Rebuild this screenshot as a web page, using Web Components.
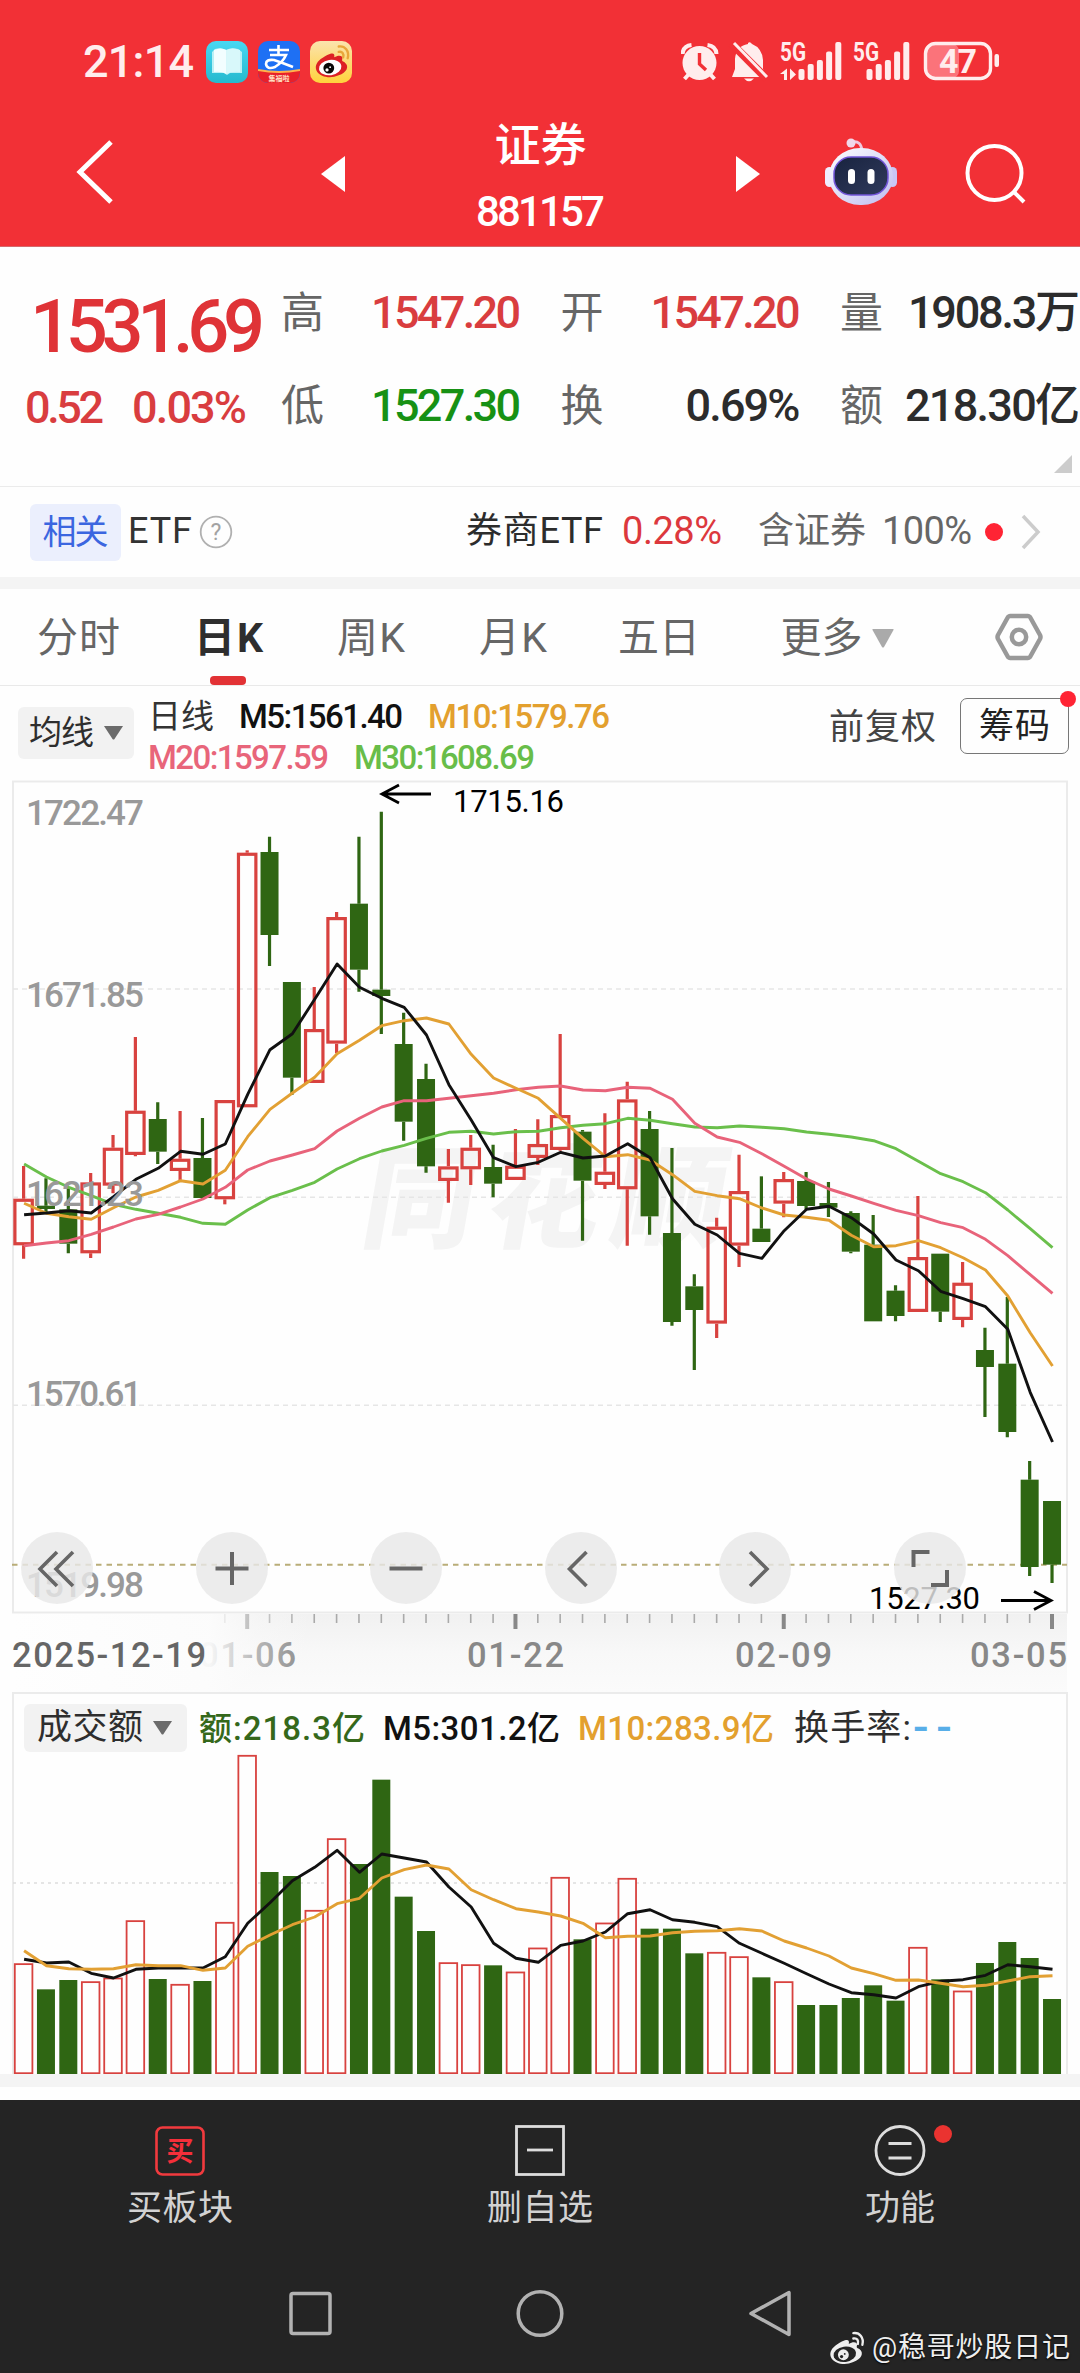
<!DOCTYPE html>
<html lang="zh-CN">
<head>
<meta charset="utf-8">
<title>证券 881157</title>
<style>
  body {
    margin: 0;
    width: 1080px;
    background: #fefefe;
    color: #333;
    font-family: Roboto, "Noto Sans CJK SC", sans-serif;
    font-size: 36px;
    overflow-x: hidden;
  }
</style>
</head>
<body>
<status-bar></status-bar>
<stock-header name="证券" code="881157"></stock-header>
<quote-panel></quote-panel>
<etf-row></etf-row>
<section-gap size="12"></section-gap>
<period-tabs></period-tabs>
<average-legend></average-legend>
<candle-chart></candle-chart>
<date-axis></date-axis>
<volume-chart></volume-chart>
<section-gap size="13"></section-gap>
<section-gap size="13" tone="#fefefe"></section-gap>
<bottom-toolbar>
  <tool-item w="106" label="买板块">
    <svg width="50" height="52" viewBox="0 0 50 52" fill="none" stroke="#f23a3e" stroke-width="2.6">
      <rect x="1.5" y="2.5" width="47" height="47" rx="6"/>
      <text x="25" y="35.5" text-anchor="middle" font-size="27" font-weight="700" fill="#f52f3a" stroke="none">买</text>
    </svg>
  </tool-item>
  <tool-item w="106" label="删自选">
    <svg width="50" height="52" viewBox="0 0 50 52" fill="none" stroke="#ddd" stroke-width="2.8">
      <rect x="1.5" y="1.5" width="47" height="48"/>
      <path d="M12 25H38"/>
    </svg>
  </tool-item>
  <tool-item w="70" label="功能" dot>
    <svg width="52" height="52" viewBox="0 0 52 52" fill="none" stroke="#ddd" stroke-width="2.8">
      <circle cx="26" cy="25.500" r="24"/>
      <path d="M14.500 18.500H37.500M14.500 33H37.500"/>
    </svg>
  </tool-item>
</bottom-toolbar>
<system-nav></system-nav>

<script>
const GREEN = "#2f6613";
const RED = "#d8423f";
const COUNT = 47;
const centerX = (i) => 23.6 + i * 22.357;

const define = (tag, html) => {
  customElements.define(
    tag,
    class extends HTMLElement {
      constructor() {
        super();
        this.attachShadow({ mode: "open" });
        this.shadowRoot.innerHTML = typeof html === "function" ? html(this) : html;
      }
    }
  );
};

const weibo = (body, pupil, hole, wave) => `
  <path d="M8 19C3 23 1 28 4 33C8 39 19 41 28 37C37 34 40 27 35 23C33 21 31 22 32 19C33 15 28 14 23 17C24 12 21 10 8 19Z" fill="${body}"/>
  <ellipse cx="18.500" cy="28.500" rx="12.500" ry="8.500" fill="${hole}" transform="rotate(-8 18 28)"/>
  <circle cx="17" cy="29" r="6" fill="${pupil}"/>
  <circle cx="15" cy="31" r="1.800" fill="${hole}"/><circle cx="18.500" cy="28" r="1" fill="${hole}"/>
  <path d="M28 5C35 4 40 10 38 18M28 11C32 10 34 13 33 17" fill="none" stroke="${wave}" stroke-width="2.600" stroke-linecap="round"/>`;

// Text whose tracking is adjusted to fill a given width.
class FitText extends HTMLElement {
  constructor() {
    super();
    this.attachShadow({ mode: "open" });
    this.shadowRoot.innerHTML = `
      <style>
        :host { display: inline-block; white-space: nowrap; line-height: 1.2; flex: none; }
      </style>
      <slot></slot>`;
  }

  connectedCallback() {
    const width = Number(this.getAttribute("w"));
    const length = [...this.textContent].length;
    const natural = this.getBoundingClientRect().width;
    if (length > 1) {
      this.style.letterSpacing = `${(width - natural) / (length - 1)}px`;
    }
    this.style.width = `${width}px`;
  }
}
customElements.define("fit-text", FitText);

define(
  "section-gap",
  (el) => `
  <style>
    :host { display: block; height: ${el.getAttribute("size")}px; background: ${el.getAttribute("tone") || "#f4f4f4"}; }
  </style>`
);

const bars = [27, 22, 18, 9.5, 0]
  .map((y, i) => `<rect x="${i * 9.2}" y="${y}" width="6" height="${38 - y}" rx="2"/>`)
  .join("");

define(
  "status-bar",
  `
  <style>
    :host { display: flex; height: 122px; box-sizing: border-box; padding: 31px 81px 0 83px; background: #f23036; color: #ffeded; justify-content: space-between; }
    .side { display: flex; height: 62px; align-items: center; }
    .time { font-size: 45px; font-weight: 500; margin-right: 12px; }
    .app { margin-right: 10px; }
    svg { display: block; flex: none; }
  </style>
  <div class="side">
    <fit-text class="time" w="111">21:14</fit-text>
    <svg class="app" width="42" height="42" viewBox="0 0 42 42">
      <defs><linearGradient id="bk" x2="0" y2="1"><stop stop-color="#48d8f3"/><stop offset="1" stop-color="#25b9ce"/></linearGradient></defs>
      <rect width="42" height="42" rx="10" fill="url(#bk)"/>
      <path d="M6 11L9 8Q15 6 20 9Q25 6 32 8L36 11V32H24L21 34L18 32H6Z" fill="#b8f0f5"/>
      <path d="M8 9Q15 6 20.500 9V33Q15 30 8 31Z" fill="#f2feff"/>
      <path d="M20.500 9Q26 6 34 9V31Q26 30 20.500 33Z" fill="#d8f8fa"/>
    </svg>
    <svg class="app" width="42" height="42" viewBox="0 0 42 42">
      <defs><clipPath id="zc"><rect width="42" height="42" rx="10"/></clipPath></defs>
      <g clip-path="url(#zc)">
        <rect width="42" height="42" fill="#1e70f4"/>
        <path d="M0 29Q21 33 42 29V42H0Z" fill="#e8202a"/>
        <path d="M0 29Q21 33 42 29" fill="none" stroke="#ffb24c" stroke-width="1.800"/>
        <g fill="none" stroke="#fff" stroke-width="2.600">
          <path d="M11 9H31M20.500 4V14M12 14H28Q25 21 17 26Q9 29 8 23Q8 18 16 19Q25 22 35 26"/>
        </g>
        <text x="21" y="39.500" text-anchor="middle" font-size="7" font-weight="700" fill="#ffe2c4">集福啦</text>
      </g>
    </svg>
    <svg width="42" height="42" viewBox="0 0 42 42">
      <defs><linearGradient id="wb" x2="0" y2="1"><stop stop-color="#fbe3ae"/><stop offset="1" stop-color="#ffd23c"/></linearGradient></defs>
      <rect width="42" height="42" rx="10" fill="url(#wb)"/>
      <g transform="translate(3.500 1) scale(.9)">${weibo("#dd2025", "#0a0808", "#fff", "#e9a63b")}</g>
    </svg>
  </div>
  <div class="side">
    <svg width="318" height="62" viewBox="0 -10 318 62" fill="#ffeded">
      <circle cx="18.500" cy="22" r="17"/>
      <path d="M8 33L3.500 38M29 33L33.500 38" stroke="#ffeded" stroke-width="4"/>
      <path d="M1.500 13Q2 5 10.500 4M35.500 13Q35 5 26.500 4" fill="none" stroke="#ffeded" stroke-width="4"/>
      <path d="M18.500 12V23L25 29" fill="none" stroke="#f23036" stroke-width="3.400"/>

      <path d="M51 36L54 28V18Q55 5 67 3V2Q69 0 71 3Q81 7 82 19V28L85 36Z"/>
      <path d="M63 37.500H73Q68 43 63 37.500Z"/>
      <path d="M50 2L86 38" stroke="#f23036" stroke-width="8"/>
      <path d="M53 2L86 36" stroke="#ffeded" stroke-width="3"/>

      <text x="99" y="19.500" font-size="25" font-weight="700" textLength="26" lengthAdjust="spacingAndGlyphs">5G</text>
      <path d="M99 33L106 27.500V39H103V33ZM109 27.500L115 33.500L109 39Z"/>
      <g transform="translate(117.500 1)">${bars}</g>
      <text x="172" y="19.500" font-size="25" font-weight="700" textLength="26" lengthAdjust="spacingAndGlyphs">5G</text>
      <g transform="translate(185.500 1)">${bars}</g>

      <rect x="245" y="3" width="33" height="34" rx="7" fill="#fb737a"/>
      <rect x="244.500" y="2.500" width="65" height="35" rx="10" fill="none" stroke="#ffeded" stroke-width="3.400"/>
      <rect x="313.500" y="13" width="4.500" height="13" rx="2"/>
      <text x="258" y="32" font-size="34" font-weight="700" textLength="38">47</text>
    </svg>
  </div>`
);

define(
  "stock-header",
  (el) => `
  <style>
    :host { display: grid; grid-template-columns: 321px 24px 391px 24px 64px 74px 1fr; height: 124px; border-bottom: 1px solid #d4696c; background: #f23036; color: #fff; }
    svg { display: block; }
    .title { display: flex; flex-direction: column; align-items: center; font-weight: 500; }
    .name { font-size: 46px; line-height: 46px; }
    .code { font-size: 42px; line-height: 48px; margin-top: 20px; }
  </style>
  <svg width="120" height="124" viewBox="0 0 120 124"><path d="M111 20L80 50L111 80" fill="none" stroke="#fff" stroke-width="5"/></svg>
  <svg width="24" height="124" viewBox="0 0 24 124"><path d="M0 52L24 34V70Z" fill="#fff"/></svg>
  <div class="title">
    <fit-text class="name" w="92">${el.getAttribute("name")}</fit-text>
    <fit-text class="code" w="129">${el.getAttribute("code")}</fit-text>
  </div>
  <svg width="24" height="124" viewBox="0 0 24 124"><path d="M0 34V70L24 52Z" fill="#fff"/></svg>
  <span></span>
  <svg width="74" height="124" viewBox="0 0 74 124">
    <defs>
      <linearGradient id="hd" x2="1" y2="1"><stop stop-color="#fff"/><stop offset="1" stop-color="#bebcf0"/></linearGradient>
      <linearGradient id="fc" x2="1" y2="1"><stop stop-color="#18233f"/><stop offset="1" stop-color="#303a5c"/></linearGradient>
    </defs>
    <rect x="1" y="45" width="9" height="20" rx="4.500" fill="#f0edff"/>
    <rect x="64" y="45" width="9" height="20" rx="4.500" fill="#c9c6f6"/>
    <path d="M28 20Q37 18 38 29" fill="none" stroke="#efc9df" stroke-width="3"/>
    <circle cx="27" cy="21" r="4.500" fill="#f1d8ea"/>
    <rect x="5" y="26" width="64" height="57" rx="31" fill="url(#hd)"/>
    <rect x="10" y="35" width="54" height="38" rx="17" fill="url(#fc)" stroke="#7255d8" stroke-width="1.500"/>
    <rect x="24" y="47" width="7" height="15" rx="3.500" fill="#fff"/>
    <rect x="43.500" y="47" width="7" height="15" rx="3.500" fill="#fff"/>
  </svg>
  <svg width="182" height="124" viewBox="0 0 182 124" fill="none" stroke="#fff" stroke-width="4">
    <circle cx="96.500" cy="51" r="27"/><path d="M116 70L126 80"/>
  </svg>`
);

define(
  "quote-cell",
  (el) => `
  <style>
    :host { display: flex; width: 240px; justify-content: space-between; align-items: center; line-height: 52px; }
    .label { font-size: 43px; color: #666; }
    fit-text { font-size: 45px; font-weight: 500; color: ${el.getAttribute("tone") || "#2c2c2c"}; }
  </style>
  <span class="label">${el.getAttribute("label")}</span>
  <fit-text w="${el.getAttribute("w")}">${el.getAttribute("value")}</fit-text>`
);

define(
  "quote-panel",
  `
  <style>
    :host { display: grid; grid-template-columns: 281px 799px; height: 239px; border-bottom: 1px solid #ebebeb; position: relative; }
    .main { padding: 36px 0 0 30px; color: #df3337; font-weight: 500; }
    .price { font-size: 74px; line-height: 88px; vertical-align: top; }
    .change { display: flex; gap: 28px; margin-left: -5px; font-size: 45px; line-height: 52px; margin-top: 10px; color: #d93d3f; }
    .cells { display: grid; grid-template-columns: 240px 240px 240px; column-gap: 39.500px; grid-auto-rows: 52px; row-gap: 41px; padding-top: 40px; }
    .corner { position: absolute; right: 8px; bottom: 13px; }
  </style>
  <div class="main">
    <fit-text class="price" w="235">1531.69</fit-text>
    <div class="change"><fit-text w="79">0.52</fit-text><fit-text w="115">0.03%</fit-text></div>
  </div>
  <div class="cells">
    <quote-cell label="高" value="1547.20" w="150" tone="#d93d3f"></quote-cell>
    <quote-cell label="开" value="1547.20" w="150" tone="#d93d3f"></quote-cell>
    <quote-cell label="量" value="1908.3万" w="172"></quote-cell>
    <quote-cell label="低" value="1527.30" w="150" tone="#179114"></quote-cell>
    <quote-cell label="换" value="0.69%" w="115"></quote-cell>
    <quote-cell label="额" value="218.30亿" w="175"></quote-cell>
  </div>
  <svg class="corner" width="18" height="18"><path d="M18 0V18H0Z" fill="#ccc"/></svg>`
);

define(
  "etf-row",
  `
  <style>
    :host { display: flex; height: 90px; align-items: center; padding-left: 30px; font-size: 36px; }
    .badge { display: flex; width: 91px; height: 57px; align-items: center; justify-content: center; background: #ebeffd; color: #3b66e0; border-radius: 6px; font-size: 34px; }
    .etf { margin: 0 7px 0 7px; }
    .name { margin-left: 233px; color: #2c2c2c; }
    .rate { margin-left: 19px; color: #dc383d; }
    .has { margin-left: 36px; color: #666; }
    .full { margin-left: 16px; color: #666; }
    .dot { width: 18px; height: 18px; border-radius: 50%; background: #ff2434; margin-left: 13px; }
    .go { margin-left: 18px; }
  </style>
  <span class="badge"><fit-text w="66">相关</fit-text></span>
  <fit-text class="etf" w="64">ETF</fit-text>
  <svg width="34" height="34" viewBox="0 0 34 34">
    <circle cx="17" cy="17" r="15.300" fill="none" stroke="#b0b0b0" stroke-width="1.800"/>
    <text x="17" y="25" text-anchor="middle" font-size="23" fill="#a3a3a3">?</text>
  </svg>
  <fit-text class="name" w="137">券商ETF</fit-text>
  <fit-text class="rate" style="font-size:38px" w="100">0.28%</fit-text>
  <fit-text class="has" w="108">含证券</fit-text>
  <fit-text class="full" style="font-size:38px" w="90">100%</fit-text>
  <span class="dot"></span>
  <svg class="go" width="20" height="36" viewBox="0 0 20 36"><path d="M2 2L17 18L2 34" fill="none" stroke="#ccc" stroke-width="3.500"/></svg>`
);

define(
  "period-tabs",
  `
  <style>
    :host { display: grid; grid-template-columns: 157px 143px 142px 142px 150px 168px 178px; height: 96px; border-bottom: 1px solid #e9e9e9; color: #666; font-size: 41px; }
    .tab { display: flex; align-items: center; justify-content: center; position: relative; padding-top: 3px; }
    .on { color: #2e2e2e; font-weight: 700; }
    .on::after { content: ""; position: absolute; left: 53px; bottom: 0; width: 36px; height: 9px; border-radius: 4px; background: #e23235; }
    .more { gap: 9px; padding-left: 38px; }
    .gear { padding: 0 0 0 56px; }
  </style>
  <div class="tab"><fit-text w="83">分时</fit-text></div>
  <div class="tab on"><fit-text w="69">日K</fit-text></div>
  <div class="tab"><fit-text w="68">周K</fit-text></div>
  <div class="tab"><fit-text w="68">月K</fit-text></div>
  <div class="tab"><fit-text w="82">五日</fit-text></div>
  <div class="tab more"><fit-text w="82">更多</fit-text>
    <svg width="22" height="19" viewBox="0 0 22 19"><path d="M1 0H21Q22 0 21.500 1L12 18Q11 19 10 18L.5 1Q0 0 1 0Z" fill="#aaa"/></svg>
  </div>
  <div class="tab gear">
    <svg width="48" height="48" viewBox="0 0 48 48" fill="none" stroke="#999" stroke-linejoin="round">
      <path d="M15 3H33Q34 3 35 4L45 22Q46 24 45 26L35 44Q34 45 33 45H15Q14 45 13 44L3 26Q2 24 3 22L13 4Q14 3 15 3Z" stroke-width="4.500"/>
      <circle cx="24" cy="24" r="7.200" stroke-width="4.500"/>
    </svg>
  </div>`
);

// Grey chip with a caret, used before an indicator's values.
define(
  "pick-button",
  (el) => `
  <style>
    :host { display: flex; box-sizing: border-box; align-items: center; background: #f2f2f2; border-radius: 6px; color: #2e2e2e; }
    svg { margin-left: 10px; }
  </style>
  <fit-text w="${el.getAttribute("w")}">${el.getAttribute("label")}</fit-text>
  <svg width="19" height="14" viewBox="0 0 19 14"><path d="M0 0H19L10.500 13Q9.500 14 8.500 13Z" fill="#6b6b6b"/></svg>`
);

define(
  "average-legend",
  `
  <style>
    :host { display: flex; height: 94px; font-size: 33px; }
    pick-button { width: 116px; height: 52px; margin: 21px 0 0 18px; padding-left: 11px; }
    .values { width: 470px; margin: 10px 0 0 14px; line-height: 40px; }
    .line { display: flex; height: 41px; align-items: center; gap: 25px; }
    .line fit-text { font-weight: 500; }
    .line .kind { font-weight: 400; }
    .adjust { margin: 21px 0 0 211px; font-size: 35px; color: #444; height: 42px; }
    .chips { position: relative; box-sizing: border-box; width: 109px; height: 56px; margin: 12px 0 0 24px; padding-top: 2px; border: 1.500px solid #777; border-radius: 7px; display: flex; align-items: center; justify-content: center; color: #222; font-size: 35px; }
    .chips i { position: absolute; right: -8px; top: -8px; width: 16px; height: 16px; border-radius: 50%; background: #ff2434; }
  </style>
  <pick-button label="均线" w="65"></pick-button>
  <div class="values">
    <div class="line">
      <fit-text class="kind" w="66">日线</fit-text>
      <fit-text w="164" style="color:#111">M5:1561.40</fit-text>
      <fit-text w="182" style="color:#e3a02e">M10:1579.76</fit-text>
    </div>
    <div class="line">
      <fit-text w="181" style="color:#e8657a">M20:1597.59</fit-text>
      <fit-text w="181" style="color:#68bd49">M30:1608.69</fit-text>
    </div>
  </div>
  <fit-text class="adjust" w="107">前复权</fit-text>
  <div class="chips"><fit-text w="71">筹码</fit-text><i></i></div>`
);

// Plot values are measured downwards, three units to a pixel.
// kind, high, body top, body bottom, low
const candles = [
  ["r", 1158, 1256, 1396, 1436], ["g", 1195, 1277, 1287, 1300], ["g", 1225, 1288, 1391, 1420],
  ["r", 1179, 1207, 1420, 1434], ["r", 1065, 1103, 1217, 1240], ["r", 771, 992, 1125, 1129],
  ["g", 967, 1017, 1115, 1152], ["r", 993, 1136, 1173, 1205], ["g", 1014, 1134, 1254, 1257],
  ["r", 960, 960, 1258, 1273], ["r", 211, 218, 982, 982], ["g", 170, 216, 465, 558],
  ["g", 606, 606, 893, 945], ["r", 621, 747, 909, 909], ["r", 396, 411, 791, 820],
  ["g", 170, 371, 569, 635], ["g", 95, 629, 648, 762], ["g", 698, 792, 1025, 1082],
  ["g", 851, 897, 1159, 1178], ["r", 1107, 1159, 1203, 1268], ["r", 1065, 1103, 1168, 1215],
  ["g", 1094, 1161, 1211, 1252], ["r", 1047, 1157, 1200, 1200], ["r", 1018, 1092, 1134, 1155],
  ["r", 762, 1005, 1110, 1112], ["g", 1050, 1055, 1202, 1382], ["r", 1000, 1175, 1215, 1227],
  ["r", 905, 958, 1228, 1397], ["g", 993, 1047, 1309, 1364], ["g", 1104, 1359, 1626, 1637],
  ["g", 1483, 1519, 1590, 1770], ["r", 1313, 1340, 1631, 1674], ["r", 1124, 1233, 1397, 1461],
  ["g", 1189, 1346, 1386, 1386], ["r", 1176, 1197, 1271, 1312], ["g", 1176, 1203, 1278, 1288],
  ["g", 1206, 1269, 1283, 1311], ["g", 1294, 1299, 1415, 1420], ["g", 1305, 1394, 1624, 1624],
  ["g", 1516, 1532, 1608, 1624], ["r", 1248, 1431, 1596, 1596], ["g", 1421, 1421, 1595, 1626],
  ["r", 1446, 1508, 1620, 1642], ["g", 1643, 1710, 1761, 1911], ["g", 1551, 1751, 1956, 1972],
  ["g", 2043, 2099, 2361, 2388], ["g", 2163, 2163, 2354, 2409],
];

const averages = {
  "#6abf4b": [1152, 1191, 1222, 1247, 1273, 1288, 1300, 1312, 1330, 1333, 1290, 1253, 1231, 1207, 1167, 1136, 1113, 1096, 1075, 1057, 1054, 1062, 1055, 1054, 1043, 1036, 1031, 1015, 1021, 1031, 1041, 1043, 1038, 1042, 1046, 1056, 1063, 1071, 1082, 1106, 1144, 1181, 1205, 1238, 1290, 1346, 1403],
  "#e8637a": [1397, 1389, 1382, 1363, 1341, 1317, 1303, 1281, 1257, 1222, 1170, 1143, 1125, 1106, 1053, 1015, 981, 962, 962, 955, 947, 940, 929, 922, 918, 930, 932, 922, 925, 958, 1030, 1071, 1087, 1121, 1159, 1197, 1227, 1248, 1270, 1291, 1307, 1328, 1343, 1378, 1427, 1484, 1540],
  "#e2a033": [1270, 1300, 1310, 1318, 1283, 1251, 1231, 1202, 1212, 1171, 1070, 988, 939, 892, 821, 781, 737, 722, 714, 732, 823, 894, 925, 955, 1015, 1075, 1130, 1124, 1140, 1184, 1234, 1247, 1256, 1284, 1305, 1312, 1321, 1366, 1400, 1397, 1382, 1403, 1433, 1470, 1548, 1658, 1758],
  "#111": [1304, 1299, 1292, 1299, 1250, 1198, 1165, 1114, 1123, 1092, 943, 809, 761, 658, 552, 622, 655, 682, 765, 914, 1020, 1133, 1160, 1147, 1117, 1134, 1128, 1091, 1133, 1256, 1333, 1365, 1420, 1435, 1352, 1288, 1279, 1313, 1362, 1440, 1472, 1534, 1556, 1580, 1648, 1837, 1986],
};

const drawLine = (values, color) =>
  `<polyline points="${values.map((v, i) => `${(centerX(i) + 0.5).toFixed(1)},${(v / 3).toFixed(1)}`).join(" ")}" fill="none" stroke="${color}" stroke-width="2.900" stroke-linejoin="round"/>`;

const drawCandle = ([kind, high, top, bottom, low], i) => {
  const x = centerX(i);
  const color = kind === "r" ? RED : GREEN;
  const wicks = `<path d="M${x} ${high / 3}V${top / 3}M${x} ${bottom / 3}V${low / 3}" stroke="${color}" stroke-width="3.200"/>`;
  const body =
    kind === "r"
      ? `<rect x="${x - 8.7}" y="${top / 3 + 1.6}" width="17.400" height="${(bottom - top) / 3 - 3.2}" fill="none" stroke="${RED}" stroke-width="3.200"/>`
      : `<rect x="${x - 9}" y="${top / 3}" width="18" height="${(bottom - top) / 3}" fill="${GREEN}"/>`;
  return wicks + body;
};

define(
  "candle-chart",
  `
  <style>
    :host { display: block; position: relative; height: 833px; }
    svg { display: block; }
    .plot { overflow: visible; }
    .controls { position: absolute; left: 21px; top: 752px; display: flex; gap: 102.500px; }
    .controls svg { width: 72px; height: 72px; border-radius: 50%; background: rgba(232, 232, 232, 0.82); }
  </style>
  <svg class="plot" width="1080" height="840" viewBox="0 0 1080 840">
    <g font-size="112" font-weight="900" fill="#f4f4f4" transform="translate(352 459) skewX(-10)">
      <text x="6" y="0" textLength="362">同花顺</text>
    </g>
    <g fill="none" stroke="#ebebeb" stroke-width="2">
      <path d="M13 833V1.500H1067V833" /><path d="M12 832.500H1068"/>
      <path d="M13 209H1067M13 417.300H1067M13 625.300H1067" stroke="#e6e6e6" stroke-width="1.500" stroke-dasharray="5 4"/>
    </g>
    <path d="M12 784.700H1067" stroke="#b9ad78" stroke-width="2" stroke-dasharray="5.500 5"/>
    ${candles.map(drawCandle).join("")}
    ${Object.entries(averages).map(([color, values]) => drawLine(values, color)).join("")}
    <g font-size="35" font-weight="500" fill="#999">
      <text x="26" y="44.500" textLength="118">1722.47</text>
      <text x="26" y="227" textLength="118">1671.85</text>
      <text x="26" y="426" textLength="118">1621.23</text>
      <text x="26" y="625.500" textLength="116">1570.61</text>
      <text x="26" y="816.500" textLength="118">1519.98</text>
    </g>
    <g font-size="31" fill="#000">
      <text x="453" y="31.500" textLength="111">1715.16</text>
      <text x="869" y="829" textLength="111">1527.30</text>
    </g>
    <g fill="none" stroke="#000" stroke-width="2.800">
      <path d="M431 14H382M399 5L382 14L399 23"/>
      <path d="M1001 820.500H1051M1034 811.500L1051 820.500L1034 829.500"/>
    </g>
  </svg>
  <div class="controls">
    <svg viewBox="0 0 72 72" fill="none" stroke="#666" stroke-width="3.600"><path d="M36 20L19 37L36 54M52 20L35 37L52 54"/></svg>
    <svg viewBox="0 0 72 72" fill="none" stroke="#666" stroke-width="4"><path d="M19.500 36.500H52.500M36 20V53"/></svg>
    <svg viewBox="0 0 72 72" fill="none" stroke="#666" stroke-width="4"><path d="M19.500 36.500H52.500"/></svg>
    <svg viewBox="0 0 72 72" fill="none" stroke="#666" stroke-width="3.600"><path d="M41.500 20L24.500 37L41.500 54"/></svg>
    <svg viewBox="0 0 72 72" fill="none" stroke="#666" stroke-width="3.600"><path d="M31 20L48 37L31 54"/></svg>
    <svg viewBox="0 0 72 72" fill="none" stroke="#666" stroke-width="4"><path d="M19.500 35V20H35.500M53 38V53H37"/></svg>
  </div>`
);

const ticks = Array.from({ length: COUNT - 9 }, (_, n) => {
  const i = n + 9;
  const major = (i - 10) % 12 === 0;
  return `<path d="M${centerX(i)} 1V${major ? 16 : 10}" stroke="${major ? "#888" : "#aaa"}" stroke-width="${major ? 4 : 1.6}"/>`;
}).join("");

define(
  "date-axis",
  `
  <style>
    :host { display: block; height: 79px; }
    svg { display: block; }
  </style>
  <svg width="1080" height="79" viewBox="0 0 1080 79">
    <defs>
      <linearGradient id="bg" x2="0" y2="1"><stop stop-color="#f1f1f1"/><stop offset=".5" stop-color="#f8f8f8"/><stop offset="1" stop-color="#fbfbfb"/></linearGradient>
      <linearGradient id="veil"><stop stop-color="#fefefe"/><stop offset=".66" stop-color="#fcfcfc" stop-opacity=".95"/><stop offset=".82" stop-color="#fafafa" stop-opacity=".4"/><stop offset="1" stop-color="#fafafa" stop-opacity="0"/></linearGradient>
    </defs>
    <rect x="13" y="1" width="1054" height="78" fill="url(#bg)"/>
    ${ticks}
    <g font-size="34.500" font-weight="500" fill="#888">
      <text x="199" y="54" textLength="97">01-06</text>
      <text x="467" y="54" textLength="97">01-22</text>
      <text x="735" y="54" textLength="97">02-09</text>
      <text x="970" y="54" textLength="97">03-05</text>
      <rect x="12" y="1" width="300" height="78" fill="url(#veil)"/>
      <text x="12" y="54" fill="#666" textLength="194">2025-12-19</text>
    </g>
  </svg>`
);

// Body kind and top of each turnover bar, same scale as above.
const turnover = "r670 g748 g720 r724 r713 r541 g717 r732 g723 r546 r45 g396 g408 r510 r295 g372 g119 g470 g573 r667 r673 g676 r695 r623 r411 g598 r548 r414 g566 g566 g640 r636 r649 g712 r724 g795 g795 g774 g736 g782 r621 g718 r752 g669 g606 g654 g777"
  .split(" ")
  .map((s) => [s[0], Number(s.slice(1))]);

const turnoverM5 = [658, 669, 666, 700, 714, 688, 684, 684, 684, 650, 550, 488, 422, 382, 331, 397, 342, 354, 366, 441, 501, 610, 655, 667, 616, 603, 576, 521, 509, 539, 547, 560, 610, 640, 670, 701, 732, 758, 764, 774, 740, 724, 719, 706, 674, 680, 688];
const turnoverM10 = [632, 677, 686, 688, 686, 674, 677, 677, 691, 684, 619, 585, 554, 531, 491, 475, 414, 389, 375, 387, 449, 479, 506, 516, 528, 550, 593, 589, 588, 578, 574, 572, 566, 573, 603, 624, 648, 684, 701, 721, 720, 730, 740, 736, 723, 710, 707];

const drawBar = ([kind, top], i) => {
  const x = centerX(i);
  const y = top / 3;
  return kind === "r"
    ? `<rect x="${x - 8.8}" y="${y + 0.8}" width="17.600" height="${332.4 - y}" fill="#fefefe" stroke="${RED}" stroke-width="1.800"/>`
    : `<rect x="${x - 9}" y="${y}" width="18" height="${334 - y}" fill="${GREEN}"/>`;
};

define(
  "volume-chart",
  `
  <style>
    :host { display: block; box-sizing: border-box; height: 382px; margin: 0 12px; border: solid #ebebeb; border-width: 2px 2px 0; }
    .legend { display: flex; height: 58px; padding: 10px 0 0 10px; box-sizing: border-box; align-items: center; font-size: 33px; font-weight: 500; }
    pick-button { width: 163px; height: 48px; padding-left: 13px; font-size: 35px; font-weight: 400; margin-right: 12px; }
    .legend > fit-text { margin: 2px 18px 0 0; }
    .legend .turn { font-size: 35px; font-weight: 400; color: #2e2e2e; margin: 2px 2px 0 2px; }
    .legend .dashes { color: #58aee8; font-size: 46px; line-height: 40px; margin: -2px 0 0; }
    svg { display: block; margin-left: -14px; }
  </style>
  <div class="legend">
    <pick-button label="成交额" w="106"></pick-button>
    <fit-text w="166" style="color:#35681b">额:218.3亿</fit-text>
    <fit-text w="177" style="color:#111">M5:301.2亿</fit-text>
    <fit-text w="196" style="color:#e3a02e">M10:283.9亿</fit-text>
    <fit-text class="turn" w="117">换手率:</fit-text>
    <fit-text class="dashes" w="39">--</fit-text>
  </div>
  <svg width="1080" height="322" viewBox="0 12 1080 322">
    <path d="M13 143H1067" stroke="#ddd" stroke-width="1.500" stroke-dasharray="3 4"/>
    ${turnover.map(drawBar).join("")}
    ${drawLine(turnoverM5, "#111")}
    ${drawLine(turnoverM10, "#e2a033")}
  </svg>`
);

define(
  "tool-item",
  (el) => `
  <style>
    :host { display: flex; flex-direction: column; align-items: center; padding-top: 25px; color: #d2d2d2; font-size: 35px; }
    .icon { position: relative; height: 52px; }
    .dot { position: absolute; left: 60px; top: 0; width: 18px; height: 18px; border-radius: 50%; background: #ea3330; }
    fit-text { margin-top: 11px; }
  </style>
  <div class="icon"><slot></slot>${el.hasAttribute("dot") ? '<i class="dot"></i>' : ""}</div>
  <fit-text w="${el.getAttribute("w")}">${el.getAttribute("label")}</fit-text>`
);

define(
  "bottom-toolbar",
  `
  <style>
    :host { display: grid; grid-template-columns: repeat(3, 1fr); height: 148px; background: #242424; }
  </style>
  <slot></slot>`
);

define(
  "system-nav",
  `
  <style>
    :host { display: flex; position: relative; height: 125px; background: #242424; justify-content: center; gap: 183px; }
    .keys { margin-top: 41px; }
    .sign { position: absolute; right: 10px; bottom: 4px; display: flex; align-items: center; gap: 6px; color: #eee; font-size: 28px; height: 42px; text-shadow: 0 1px 2px #000; }
  </style>
  <svg class="keys" width="46" height="50" viewBox="0 0 46 50"><rect x="4" y="4.500" width="39" height="40" rx="2" fill="none" stroke="#b2b2b2" stroke-width="3.500"/></svg>
  <svg class="keys" width="48" height="50" viewBox="0 0 48 50"><circle cx="24" cy="24.500" r="21.800" fill="none" stroke="#b2b2b2" stroke-width="3.500"/></svg>
  <svg class="keys" width="46" height="50" viewBox="0 0 46 50"><path d="M42 3.500V45.500L4 24.500Z" fill="none" stroke="#b2b2b2" stroke-width="3.500" stroke-linejoin="round"/></svg>
  <div class="sign">
    <svg width="38" height="36" viewBox="0 2 42 39">${weibo("#eee", "#eee", "#242424", "#eee")}</svg>
    <fit-text w="198">@稳哥炒股日记</fit-text>
  </div>`
);
</script>
</body>
</html>
